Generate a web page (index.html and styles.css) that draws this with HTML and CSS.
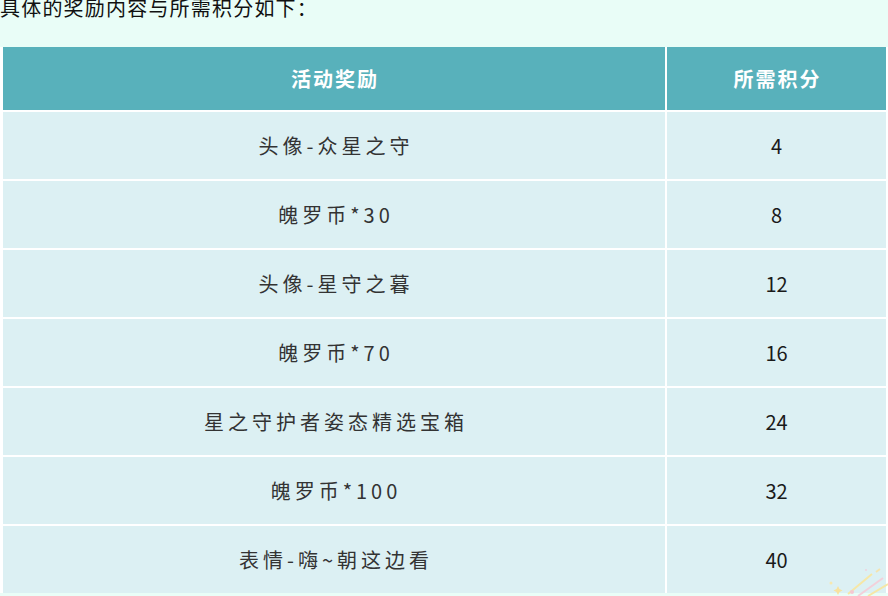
FILE: index.html
```html
<!DOCTYPE html>
<html lang="zh">
<head>
<meta charset="utf-8">
<title>奖励</title>
<link rel="stylesheet" href="styles.css">
</head>
<body>
<p class="intro">具体的奖励内容与所需积分如下：</p>
<div class="table">
  <div class="th">活动奖励</div><div class="th">所需积分</div>
  <div class="td name">头像-众星之守</div><div class="td num">4</div>
  <div class="td name">魄罗币*30</div><div class="td num">8</div>
  <div class="td name">头像-星守之暮</div><div class="td num">12</div>
  <div class="td name">魄罗币*70</div><div class="td num">16</div>
  <div class="td name">星之守护者姿态精选宝箱</div><div class="td num">24</div>
  <div class="td name">魄罗币*100</div><div class="td num">32</div>
  <div class="td name">表情-嗨~朝这边看</div><div class="td num">40</div>
</div>
<svg class="sparkle" width="60" height="32" viewBox="0 0 60 32">
  <line x1="20" y1="30" x2="44" y2="10" stroke="#f6e7a6" stroke-width="2"/>
  <line x1="30" y1="32" x2="55" y2="14" stroke="#f3d0da" stroke-width="2"/>
  <line x1="40" y1="32" x2="60" y2="20" stroke="#f6e7a6" stroke-width="2"/>
  <line x1="48" y1="8" x2="52" y2="5" stroke="#f3e3b0" stroke-width="2"/>
  <path d="M10 22 l1.5 3 3 1.5 -3 1.5 -1.5 3 -1.5 -3 -3 -1.5 3 -1.5z" fill="#f7e2a0"/>
  <circle cx="3" cy="19" r="1.5" fill="#f7e8b0"/>
  <circle cx="24" cy="28" r="2" fill="#f4c8d2"/>
  <circle cx="38" cy="6" r="1" fill="#f0d0dc"/>
</svg>
</body>
</html>
```

FILE: styles.css
```css
html, body {
  margin: 0;
  padding: 0;
}
body {
  background: #e9fdf7;
  width: 888px;
  height: 596px;
  overflow: hidden;
  position: relative;
  font-family: "Noto Sans CJK SC", "Noto Sans", sans-serif;
}
.intro {
  margin: 0;
  padding: 0;
  height: 47px;
  font-size: 20px;
  line-height: 22px;
  margin-top: -3px;
  margin-bottom: 3px;
  letter-spacing: 1.2px;
  color: #111;
}
.table {
  display: grid;
  grid-template-columns: 662px 219px;
  grid-template-rows: 63px repeat(7, 67px);
  gap: 2px;
  padding: 0 2px 0 3px;
  background: #fff;
  width: 883px;
}
.th {
  background: #58b1bb;
  color: #fff;
  font-weight: 700;
  font-size: 20px;
  letter-spacing: 2px;
  display: flex;
  align-items: center;
  justify-content: center;
  padding-left: 2px;
}
.td {
  background: #dcf0f3;
  display: flex;
  align-items: center;
  justify-content: center;
}
.name {
  color: #333;
  font-size: 20px;
  letter-spacing: 4px;
  padding-left: 4px;
}
.num {
  color: #1a1a1a;
  font-size: 20px;
}
.sparkle {
  position: absolute;
  right: 0;
  bottom: 0;
}
```
